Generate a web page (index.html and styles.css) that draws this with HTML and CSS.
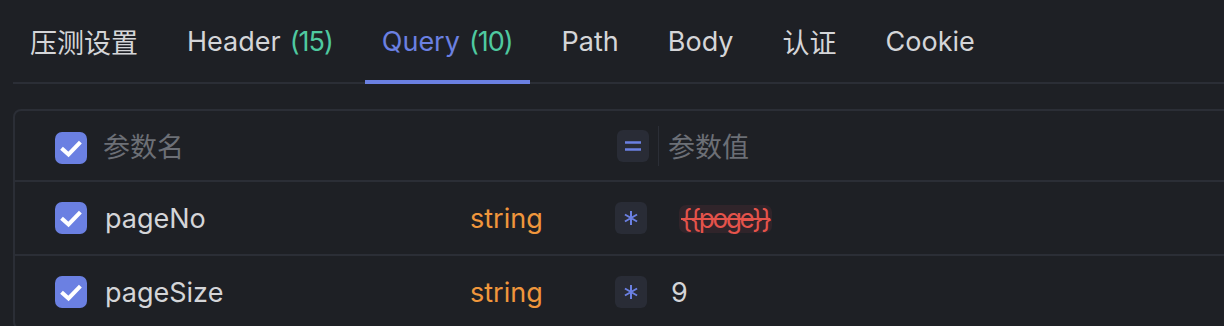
FILE: index.html
```html
<!DOCTYPE html>
<html lang="zh">
<head>
<meta charset="utf-8">
<link rel="stylesheet" href="styles.css">
</head>
<body>
<div class="page">
  <nav class="tabs">
    <div class="tab">压测设置</div>
    <div class="tab">Header <span class="count">(15)</span></div>
    <div class="tab active">Query <span class="count">(10)</span></div>
    <div class="tab">Path</div>
    <div class="tab">Body</div>
    <div class="tab">认证</div>
    <div class="tab">Cookie</div>
  </nav>

  <div class="card">
    <div class="row head">
      <span class="check"><svg viewBox="0 0 32 32" width="32" height="32"><path d="M8 17.5 L13.5 22.5 L24 11.5" fill="none" stroke="#fff" stroke-width="4" stroke-linecap="square"/></svg></span>
      <span class="name placeholder">参数名</span>
      <span class="type"></span>
      <span class="op"><svg viewBox="0 0 32 32" width="32" height="32"><path d="M8 12.5 H24 M8 19.5 H24" stroke="#6b80e2" stroke-width="2.5"/></svg></span>
      <span class="divider"></span>
      <span class="value placeholder">参数值</span>
    </div>
    <div class="row">
      <span class="check"><svg viewBox="0 0 32 32" width="32" height="32"><path d="M8 17.5 L13.5 22.5 L24 11.5" fill="none" stroke="#fff" stroke-width="4" stroke-linecap="square"/></svg></span>
      <span class="name">pageNo</span>
      <span class="type">string</span>
      <span class="op"><svg viewBox="0 0 32 32" width="32" height="32"><path d="M16 9 V23 M9.94 12.5 L22.06 19.5 M9.94 19.5 L22.06 12.5" stroke="#6b80e2" stroke-width="2"/></svg></span>
      <span class="value"><span class="bad">{{poge}}</span></span>
    </div>
    <div class="row">
      <span class="check"><svg viewBox="0 0 32 32" width="32" height="32"><path d="M8 17.5 L13.5 22.5 L24 11.5" fill="none" stroke="#fff" stroke-width="4" stroke-linecap="square"/></svg></span>
      <span class="name">pageSize</span>
      <span class="type">string</span>
      <span class="op"><svg viewBox="0 0 32 32" width="32" height="32"><path d="M16 9 V23 M9.94 12.5 L22.06 19.5 M9.94 19.5 L22.06 12.5" stroke="#6b80e2" stroke-width="2"/></svg></span>
      <span class="value plain">9</span>
    </div>
  </div>
</div>
</body>
</html>
```

FILE: styles.css
```css
html, body {
  margin: 0;
  padding: 0;
  background: #1e2025;
}
body {
  width: 1224px;
  height: 326px;
  overflow: hidden;
  font-family: Inter, "Noto Sans CJK SC", sans-serif;
  color: #d4d5d8;
}
.page {
  padding-left: 13px;
}
.tabs {
  display: flex;
  gap: 15px;
  height: 82px;
  border-bottom: 2px solid #2b2e36;
}
.tab {
  display: flex;
  align-items: center;
  gap: 9px;
  padding: 0 17px;
  font-size: 27px;
  color: #d4d5d8;
  white-space: nowrap;
  margin-bottom: -2px;
  border-bottom: 4px solid transparent;
  padding-top: 2px;
  box-sizing: border-box;
  height: 84px;
}
.tab.active {
  color: #6b80e2;
  border-bottom-color: #6b80e2;
}
.count {
  color: #4fc9a0;
  letter-spacing: -1px;
}
.card {
  margin-top: 25px;
  margin-right: -20px;
  border: 2px solid #2b2e36;
  border-radius: 8px;
}
.row {
  display: flex;
  align-items: center;
  height: 72px;
  padding-left: 40px;
  border-top: 2px solid #2b2e36;
  font-size: 27px;
}
.row.head {
  height: 69px;
  border-top: none;
}
.check {
  width: 32px;
  height: 32px;
  border-radius: 7px;
  background: #6b80e2;
  flex: none;
  display: flex;
}
.head .check {
  margin-top: 4px;
}
.name {
  width: 365px;
  margin-left: 18px;
  flex: none;
}
.head .name {
  margin-left: 16px;
  width: 367px;
}
.placeholder {
  color: #6c6f76;
}
.type {
  width: 145px;
  flex: none;
  color: #f0963c;
}
.op {
  width: 32px;
  height: 32px;
  border-radius: 6px;
  background: #292c36;
  flex: none;
  display: flex;
}
.head .op {
  margin-left: 2px;
}
.divider {
  width: 1px;
  height: 40px;
  background: #2b2e36;
  margin-left: 9px;
  flex: none;
}
.value {
  margin-left: 32px;
}
.head .value {
  margin-left: 9px;
}
.value.plain {
  margin-left: 24px;
}
.bad {
  display: inline-block;
  color: #e5534b;
  text-decoration: line-through;
  background: #30242a;
  border-radius: 7px;
  padding: 0 2px;
  font-size: 26px;
  letter-spacing: -2.2px;
  line-height: 28px;
}
```
